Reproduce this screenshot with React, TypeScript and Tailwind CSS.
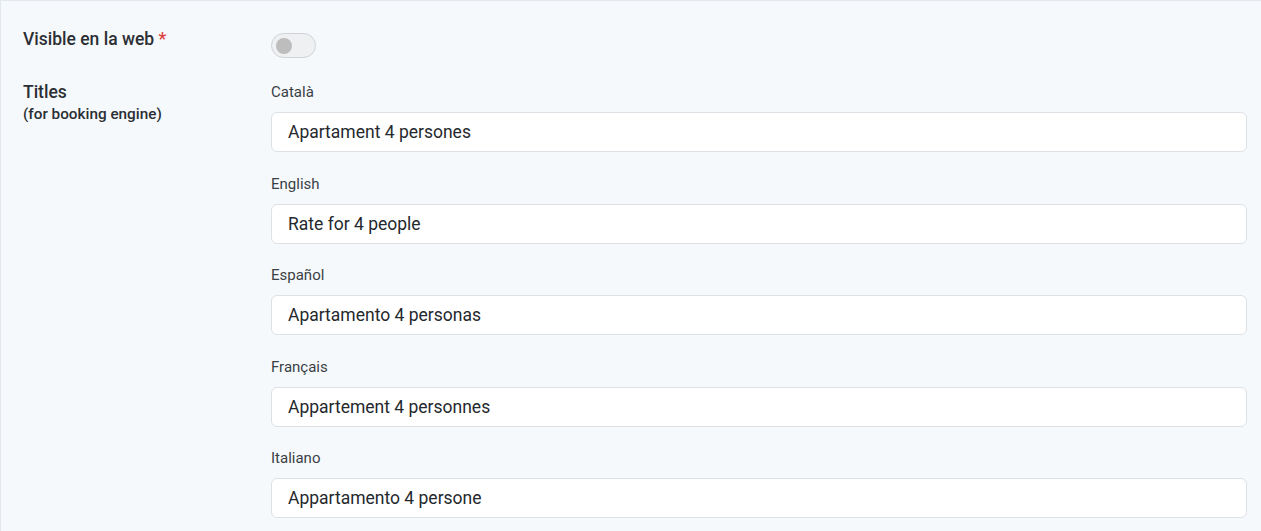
import { useState } from "react";

const FONT = "font-['Roboto','Liberation_Sans',sans-serif]";

const TITLES = [
  { lang: "Català", value: "Apartament 4 persones" },
  { lang: "English", value: "Rate for 4 people" },
  { lang: "Español", value: "Apartamento 4 personas" },
  { lang: "Français", value: "Appartement 4 personnes" },
  { lang: "Italiano", value: "Appartamento 4 persone" },
];

function Toggle() {
  const [on, setOn] = useState(false);
  return (
    <button
      type="button"
      onClick={() => setOn(!on)}
      className={`mt-[6px] flex h-[25px] w-[45px] items-center rounded-full border border-[#cfd3d8] px-[4px] ${
        on ? "justify-end bg-[#3b82f6]" : "justify-start bg-[#eef0f2]"
      }`}
    >
      <span className="h-[16px] w-[16px] rounded-full bg-[#bdbdbd]" />
    </button>
  );
}

export default function App() {
  const [values, setValues] = useState(TITLES.map((t) => t.value));

  return (
    <div
      className={`${FONT} h-[531px] overflow-hidden border-l border-t border-[#e3e8ee] bg-[#f6f9fc] pl-[22px] pr-[14px] pt-[26px] text-[#2b2f33]`}
    >
      <div className="flex">
        <div className="w-[248px] shrink-0 text-[17.5px] font-medium leading-[24px]">
          Visible en la web <span className="text-[#e03e3e]">*</span>
        </div>
        <Toggle />
      </div>

      <div className="mt-[22px] flex">
        <div className="w-[248px] shrink-0 font-medium">
          <div className="text-[17.5px] leading-[24px]">Titles</div>
          <div className="text-[15.3px] leading-[20px]">(for booking engine)</div>
        </div>
        <div className="flex flex-1 flex-col gap-[21.5px] pt-[2px]">
          {TITLES.map((t, i) => (
            <label key={t.lang} className="flex flex-col">
              <span className="text-[15px] leading-[20px] text-[#3a3f44]">{t.lang}</span>
              <input
                value={values[i]}
                onChange={(e) => {
                  const next = [...values];
                  next[i] = e.target.value;
                  setValues(next);
                }}
                className="mt-[10px] h-[40px] rounded-[6px] border border-[#dde1e6] bg-white px-[16px] text-[17.5px] text-[#25292d] outline-none"
              />
            </label>
          ))}
        </div>
      </div>
    </div>
  );
}
